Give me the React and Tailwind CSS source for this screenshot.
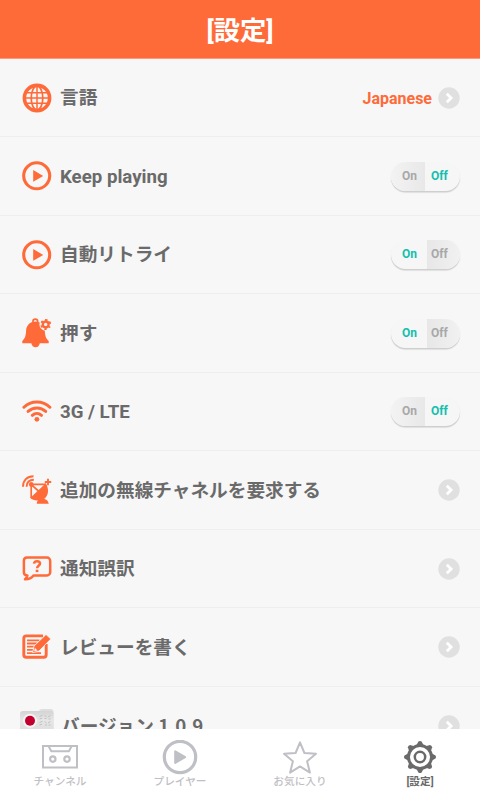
import React, { useState } from 'react';

const GlobeIcon = () => (
    <svg className="w-[30px] h-[30px]" viewBox="0 0 30 30" fill="none" stroke="#ff6a39">
        <circle cx="15" cy="15" r="12.6" strokeWidth="3.6" />
        <ellipse cx="15" cy="15" rx="5.8" ry="12" strokeWidth="1.7" />
        <path d="M15 3v24M3 15h24M5 9.7h20M5 20.3h20" strokeWidth="1.5" />
    </svg>
);

const PlayIcon = () => (
    <svg className="w-[30px] h-[30px]" viewBox="0 0 30 30">
        <circle cx="14.7" cy="14.8" r="13" fill="none" stroke="#ff6a39" strokeWidth="3.1" />
        <path d="M11.2 9v11.8L21.2 14.9z" fill="#ff6a39" />
    </svg>
);

const BellIcon = () => (
    <svg className="w-[30px] h-[30px]" viewBox="0 0 30 30" fill="#ff6a39">
        <circle cx="13.3" cy="3.5" r="2.4" fill="none" stroke="#ff6a39" strokeWidth="1.6" />
        <path d="M13.3 3.6C8 3.6 4.4 7.5 4.1 12.5C3.9 18 3 20.5.3 23v2.3h26.4V23c-2.8-2.5-3.7-5-3.9-10.5C22.5 7.5 18.6 3.6 13.3 3.6z" />
        <path d="M9.3 25h8.5c-.4 2.8-2 4.2-4.2 4.200s-3.900-1.400-4.300-4.200z" />
        <circle cx="23.7" cy="6.4" r="6.3" fill="#f7f7f7" />
        <circle cx="23.7" cy="6.4" r="2.9" fill="none" stroke="#ff6a39" strokeWidth="2.4" />
        <circle cx="23.7" cy="6.4" r="4.5" fill="none" stroke="#ff6a39" strokeWidth="2" strokeDasharray="2.2 2.512" strokeDashoffset="1.1" transform="rotate(30 23.7 6.4)" />
    </svg>
);

const WifiIcon = () => (
    <svg className="w-[30px] h-[30px]" viewBox="0 0 30 30" fill="none" stroke="#ff6a39" strokeWidth="3" strokeLinecap="round">
        <path d="M1.9 10.2C9 3.2 20.8 3.2 27.9 10.2" />
        <path d="M6.1 14.400c5-4.700 12.600-4.700 17.600 0" />
        <path d="M10.3 18.300c2.700-2.500 6.500-2.500 9.200 0" />
        <circle cx="14.9" cy="22.3" r="2.400" fill="#ff6a39" stroke="none" />
    </svg>
);

const SatelliteIcon = () => (
    <svg className="w-[30px] h-[30px]" viewBox="0 0 30 30" fill="none" stroke="#ff6a39">
        <path d="M1 11.700C1 5.500 5 1.200 11.500 1.200M4.600 11.700c0-4.300 2.800-7 7.200-7" strokeWidth="2" />
        <path d="M9 9.300H24M9.200 9.300V23M9 9.300l8 7.200" strokeWidth="1.7" />
        <circle cx="9.2" cy="9.4" r="2.3" fill="#ff6a39" stroke="none" />
        <path d="M23.800 8.300c3.400 6 3 12-1.600 15.600c2.500.5 4.200 2 4.500 4.800H14.800c0-1.500.5-2.600 1.300-3.300c-3.200.2-6-.5-7.900-2.300z" fill="#ff6a39" stroke="none" />
        <path d="M26 3.800v6.400M22.800 7h6.400" strokeWidth="1.9" />
    </svg>
);

const QuestionIcon = () => (
    <svg className="w-[30px] h-[30px]" viewBox="0 0 30 30" fill="none" stroke="#ff6a39">
        <path d="M5 3.600h20a3.200 3.200 0 0 1 3.200 3.200v11.400a3.200 3.200 0 0 1-3.200 3.200H11.500C9.500 24 6.500 25.300 3 25.200c1.500-1.200 2.300-2.400 2.400-3.800C3.200 21.400 1.900 20 1.900 18.200V6.800A3.200 3.200 0 0 1 5 3.600z" strokeWidth="2.5" strokeLinejoin="round" />
        <path d="M12 9.700c.2-1.600 1.300-2.500 3-2.500s3 .9 3 2.300c0 2.200-2.900 2.300-2.900 4.700" strokeWidth="2.5" />
        <path d="M13.7 15.700h2.700v2.500h-2.700z" fill="#ff6a39" stroke="none" />
    </svg>
);

const EditIcon = () => (
    <svg className="w-[30px] h-[30px]" viewBox="0 0 30 30" fill="none" stroke="#ff6a39">
        <path d="M21 3.900H4.300a2.500 2.500 0 0 0-2.500 2.500v16.400a2.500 2.500 0 0 0 2.500 2.500h17.400a2.500 2.500 0 0 0 2.500-2.500V12" strokeWidth="2.9" />
        <path d="M5 8.300h12.500M5 11.500h10M5 14.700h7.500M5 17.900h6M5 21.100h14" strokeWidth="1.8" />
        <path d="M10.600 20.700l1.400-6.600L24 2.500l4.800 4.500L17 19z" fill="#ff6a39" stroke="#f7f7f7" strokeWidth=".8" />
        <path d="M12.800 15.800l2.700 2.600l-3.300.9z" fill="#f7f7f7" stroke="none" />
    </svg>
);

const FlagIcon = () => (
    <svg className="w-[34px] h-[34px]" viewBox="0 0 34 34">
        <defs>
            <linearGradient id="flag" x1="0" x2="0" y1="0" y2="1">
                <stop offset="0" stopColor="#d4d4d4" />
                <stop offset=".35" stopColor="#e6e6e6" />
                <stop offset="1" stopColor="#dadada" />
            </linearGradient>
        </defs>
        <rect x="19" y="0" width="14.5" height="26" rx="3" fill="#dedede" />
        <rect x="0" y="2" width="33.5" height="26" rx="3" fill="url(#flag)" />
        <path d="M19.500 7.500l3-1.200M24.500 6.300l2 1.500M28 8l2.500-1.500M19.500 10l2.500-.8M24.500 9.500h2M28.500 10h2M19.500 13.500l3-1.200M24.500 12.500l2 1.500M28 14l2.500-1.500M19.500 16l2.500-.8M25 16h2M28.500 16h2" stroke="#c2c2c2" strokeWidth="1" />
        <circle cx="10" cy="11.8" r="7" fill="#f5f5f5" />
        <circle cx="10" cy="11.8" r="5" fill="#c4002f" />
    </svg>
);

const Chevron = () => (
    <svg className="w-[22px] h-[22px] shrink-0" viewBox="0 0 22 22">
        <circle cx="11" cy="11" r="10.7" fill="#e0e0e0" />
        <path d="M8.800 6.700l4.300 4.300l-4.300 4.300" fill="none" stroke="#fff" strokeWidth="2.8" />
    </svg>
);

const Toggle = ({ on, onChange }) => (
    <button
        onClick={onChange}
        className="w-[69px] h-[29px] flex rounded-full overflow-hidden bg-[#f6f6f6] shadow-[0_1.5px_1px_#cdcdcd] text-[12px] leading-[28px] font-bold"
    >
        <span className={`h-full pl-[11px] text-left ${on ? 'w-9 text-[#13bfae]' : 'w-[34px] bg-linear-to-r from-[#f3f3f3] to-[#e8e8e8] text-[#a8a8a8]'}`}>On</span>
        <span className={`h-full flex-1 text-left ${on ? 'pl-1 bg-linear-to-r from-[#e7e7e7] to-[#f1f1f1] text-[#a8a8a8]' : 'pl-1.5 text-[#13bfae]'}`}>Off</span>
    </button>
);

const CassetteTab = () => (
    <svg className="w-9 h-9" viewBox="0 0 36 36" fill="none" stroke="#bfc0c5" strokeWidth="2">
        <path d="M1 6h34v21.500H1z" />
        <path d="M6.500 6l2.800 5.200h17.600L29.700 6" />
        <circle cx="10.8" cy="19.1" r="2.7" strokeWidth="2.2" />
        <circle cx="25" cy="19.1" r="2.7" strokeWidth="2.2" />
    </svg>
);

const PlayerTab = () => (
    <svg className="w-9 h-9" viewBox="0 0 36 36">
        <circle cx="18" cy="17" r="15.7" fill="none" stroke="#bfc0c5" strokeWidth="3.2" />
        <path d="M13.200 11.300v11.600L23.200 17.100z" fill="#bfc0c5" stroke="#bfc0c5" strokeWidth="2" strokeLinejoin="round" />
    </svg>
);

const StarTab = () => (
    <svg className="w-9 h-9" viewBox="0 0 36 36" fill="none" stroke="#bfc0c5" strokeWidth="2" strokeLinejoin="round">
        <path d="M18 2.300l4.400 10.700l11.600.8l-8.900 7.400l2.800 11.400L18 26.400l-9.900 6.200l2.800-11.400L2 13.800l11.600-.8z" />
    </svg>
);

const GearTab = () => (
    <svg className="w-9 h-9" viewBox="0 0 36 36" fill="none" stroke="#6a6a6a">
        <circle cx="18" cy="17" r="11.5" strokeWidth="2.9" />
        <circle cx="18" cy="17" r="5.2" strokeWidth="2.5" />
        <g fill="#6a6a6a" stroke="none">
            {[0, 45, 90, 135, 180, 225, 270, 315].map(a => (
                <path key={a} d="M14 6l2.400-4.500q1.600-1.200 3.200 0L22 6z" transform={`rotate(${a} 18 17)`} />
            ))}
        </g>
    </svg>
);

const rows = [
    { id: 'lang', label: '言語', Icon: GlobeIcon, value: 'Japanese' },
    { id: 'keep', label: 'Keep playing', Icon: PlayIcon, toggle: true },
    { id: 'retry', label: '自動リトライ', Icon: PlayIcon, toggle: true },
    { id: 'push', label: '押す', Icon: BellIcon, toggle: true },
    { id: 'lte', label: '3G / LTE', Icon: WifiIcon, toggle: true },
    { id: 'request', label: '追加の無線チャネルを要求する', Icon: SatelliteIcon },
    { id: 'report', label: '通知誤訳', Icon: QuestionIcon },
    { id: 'review', label: 'レビューを書く', Icon: EditIcon },
    { id: 'version', label: 'バージョン 1.0.9', Icon: FlagIcon, wide: true },
];

const tabs = [
    { label: 'チャンネル', Icon: CassetteTab },
    { label: 'プレイヤー', Icon: PlayerTab },
    { label: 'お気に入り', Icon: StarTab },
    { label: '[設定]', Icon: GearTab, active: true },
];

const App = () => {
    const [toggles, setToggles] = useState({ keep: false, retry: true, push: true, lte: false });

    const flip = (id) => setToggles(prev => ({ ...prev, [id]: !prev[id] }));

    return (
        <div className="w-[480px] h-[800px] flex flex-col overflow-hidden bg-[#f7f7f7] font-[Roboto,'Noto_Sans_CJK_JP',sans-serif]">
            <header className="h-[58.5px] shrink-0 flex items-center justify-center pt-[5px] bg-[#ff6a39] border-b border-[#fd9a79] text-white text-[26.3px] font-bold">
                <h1>[設定]</h1>
            </header>

            <main className="h-[670px] shrink-0 overflow-hidden">
                {rows.map(({ id, label, Icon, value, toggle, wide }) => (
                    <div key={id} className="h-[78.5px] flex items-center pt-px pr-5 border-b border-[#eeeeee]">
                        <div className={`shrink-0 ${wide ? 'ml-5 mr-[7px]' : 'ml-[22px] mr-2'}`}>
                            <Icon />
                        </div>
                        <span className={`flex-1 text-[18.67px] font-bold text-[#6a6a6a] ${wide ? "pb-0.5 font-['Noto_Sans_CJK_JP',sans-serif]" : 'pt-px'}`}>{label}</span>
                        {value && <span className="mr-1.5 pt-0.5 text-[16px] font-bold text-[#ff6a39]">{value}</span>}
                        {toggle ? <Toggle on={toggles[id]} onChange={() => flip(id)} /> : <Chevron />}
                    </div>
                ))}
            </main>

            <nav className="flex-1 grid grid-cols-4 bg-white">
                {tabs.map(({ label, Icon, active }) => (
                    <div key={label} className="flex flex-col items-center pt-[11px]">
                        <Icon />
                        <span className={`-mt-px text-[10.67px] leading-[14px] ${active ? 'font-bold text-[#6a6a6a]' : 'font-medium text-[#bfc0c5]'}`}>{label}</span>
                    </div>
                ))}
            </nav>
        </div>
    );
};

export default App;
